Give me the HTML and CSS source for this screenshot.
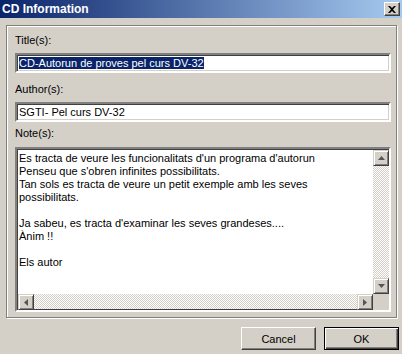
FILE: index.html
```html
<!DOCTYPE html>
<html lang="ca">
<head>
    <meta charset="UTF-8">
    <title>CD Information</title>
    <link rel="stylesheet" href="styles.css">
</head>
<body>
    <div class="dialog">
        <div class="titlebar">
            <span class="title">CD Information</span>
            <button class="close" aria-label="Close">
                <svg width="8" height="7" viewBox="0 0 8 7"><path d="M0 0h2l2 2 2-2h2L5 3.5 8 7H6L4 5 2 7H0l3-3.5z" fill="#000"/></svg>
            </button>
        </div>

        <div class="body">
            <div class="group">
                <label class="label">Title(s):</label>
                <div class="field"><span class="selected">CD-Autorun de proves pel curs DV-32</span></div>

                <label class="label author-label">Author(s):</label>
                <div class="field">SGTI- Pel curs DV-32</div>

                <label class="label notes-label">Note(s):</label>
                <div class="notes">
                    <div class="notes-text">Es tracta de veure les funcionalitats d'un programa d'autorun
Penseu que s'obren infinites possibilitats.
Tan sols es tracta de veure un petit exemple amb les seves
possibilitats.

Ja sabeu, es tracta d'examinar les seves grandeses....
Ànim !!

Els autor</div>
                    <div class="vscroll">
                        <span class="arrow"><svg width="7" height="4" viewBox="0 0 7 4"><path d="M3.5 0L7 4H0z"/></svg></span>
                        <span class="track"></span>
                        <span class="arrow"><svg width="7" height="4" viewBox="0 0 7 4"><path d="M0 0h7L3.5 4z"/></svg></span>
                    </div>
                    <div class="hscroll">
                        <span class="arrow"><svg width="4" height="7" viewBox="0 0 4 7"><path d="M0 3.5L4 0v7z"/></svg></span>
                        <span class="track"></span>
                        <span class="arrow"><svg width="4" height="7" viewBox="0 0 4 7"><path d="M0 0l4 3.5L0 7z"/></svg></span>
                    </div>
                    <div class="corner"></div>
                </div>
            </div>

            <div class="buttons">
                <button class="btn">Cancel</button>
                <button class="btn default">OK</button>
            </div>
        </div>
    </div>
</body>
</html>
```

FILE: styles.css
```css
* {
    box-sizing: border-box;
}
body {
    margin: 0;
    background: #d4d0c8;
    font-family: "Liberation Sans", Arial, sans-serif;
    font-size: 11px;
    color: #000;
}
.dialog {
    width: 402px;
    height: 354px;
    overflow: hidden;
}
.titlebar {
    height: 18px;
    display: flex;
    align-items: center;
    justify-content: space-between;
    padding: 0 2px;
    background: linear-gradient(to right, #0a246a, #a6caf0);
}
.title {
    color: #fff;
    font-weight: bold;
    font-size: 12px;
}
.close {
    width: 16px;
    height: 14px;
    padding: 0;
    display: flex;
    align-items: center;
    justify-content: center;
    background: #d4d0c8;
    border: 1px solid;
    border-color: #fff #404040 #404040 #fff;
    box-shadow: inset -1px -1px #808080;
}
.body {
    padding: 7px 0 0 6px;
}
.group {
    width: 391px;
    height: 293px;
    padding: 8px 5px 0 8px;
    border: 1px solid #808080;
    box-shadow: inset 1px 1px #fff, 1px 1px #fff;
    display: flex;
    flex-direction: column;
}
.label {
    display: block;
    line-height: 13px;
    height: 13px;
    margin-bottom: 6px;
}
.author-label {
    margin-top: 10px;
}
.notes-label {
    margin-top: 5px;
    margin-bottom: 7px;
}
.field {
    height: 20px;
    background: #fff;
    border: 2px solid;
    border-color: #808080 #fff #fff #808080;
    box-shadow: inset 1px 1px #404040, inset -1px -1px #d4d0c8;
    padding: 0 2px;
    line-height: 16px;
    white-space: nowrap;
}
.selected {
    background: #0a246a;
    color: #fff;
    display: inline-block;
    line-height: 12px;
}
.notes {
    height: 165px;
    border: 2px solid;
    border-color: #808080 #fff #fff #808080;
    box-shadow: inset 1px 1px #404040;
    display: grid;
    grid-template-columns: 1fr 16px;
    grid-template-rows: 1fr 16px;
}
.notes-text {
    background: #fff;
    white-space: pre;
    line-height: 13px;
    padding: 2px 0 0 1px;
    margin: 1px 0 0 1px;
    overflow: hidden;
}
.vscroll, .hscroll {
    display: flex;
}
.vscroll {
    flex-direction: column;
    margin-top: 1px;
}
.hscroll {
    margin-left: 1px;
}
.track {
    flex: 1;
    background: repeating-conic-gradient(#fff 0 25%, #d4d0c8 0 50%) 0 0 / 2px 2px;
}
.hscroll .track {
    border-bottom: 1px solid #404040;
}
.arrow {
    width: 16px;
    height: 16px;
    flex: none;
    display: flex;
    align-items: center;
    justify-content: center;
    background: #d4d0c8;
    border: 1px solid;
    border-color: #d4d0c8 #404040 #404040 #d4d0c8;
    box-shadow: inset 1px 1px #fff, inset -1px -1px #808080;
}
.arrow svg {
    fill: #555;
}
.corner {
    background: #d4d0c8;
}
.buttons {
    display: flex;
    justify-content: flex-end;
    gap: 8px;
    padding: 9px 3px 0 0;
}
.btn {
    width: 75px;
    height: 23px;
    padding: 0;
    font-family: "Liberation Sans", Arial, sans-serif;
    font-size: 11px;
    color: #000;
    background: #d4d0c8;
    border: 1px solid;
    border-color: #fff #404040 #404040 #fff;
    box-shadow: inset -1px -1px #808080;
}
.btn.default {
    border: 1px solid #000;
    box-shadow: inset 1px 1px #fff, inset -1px -1px #404040, inset -2px -2px #808080;
}
```
